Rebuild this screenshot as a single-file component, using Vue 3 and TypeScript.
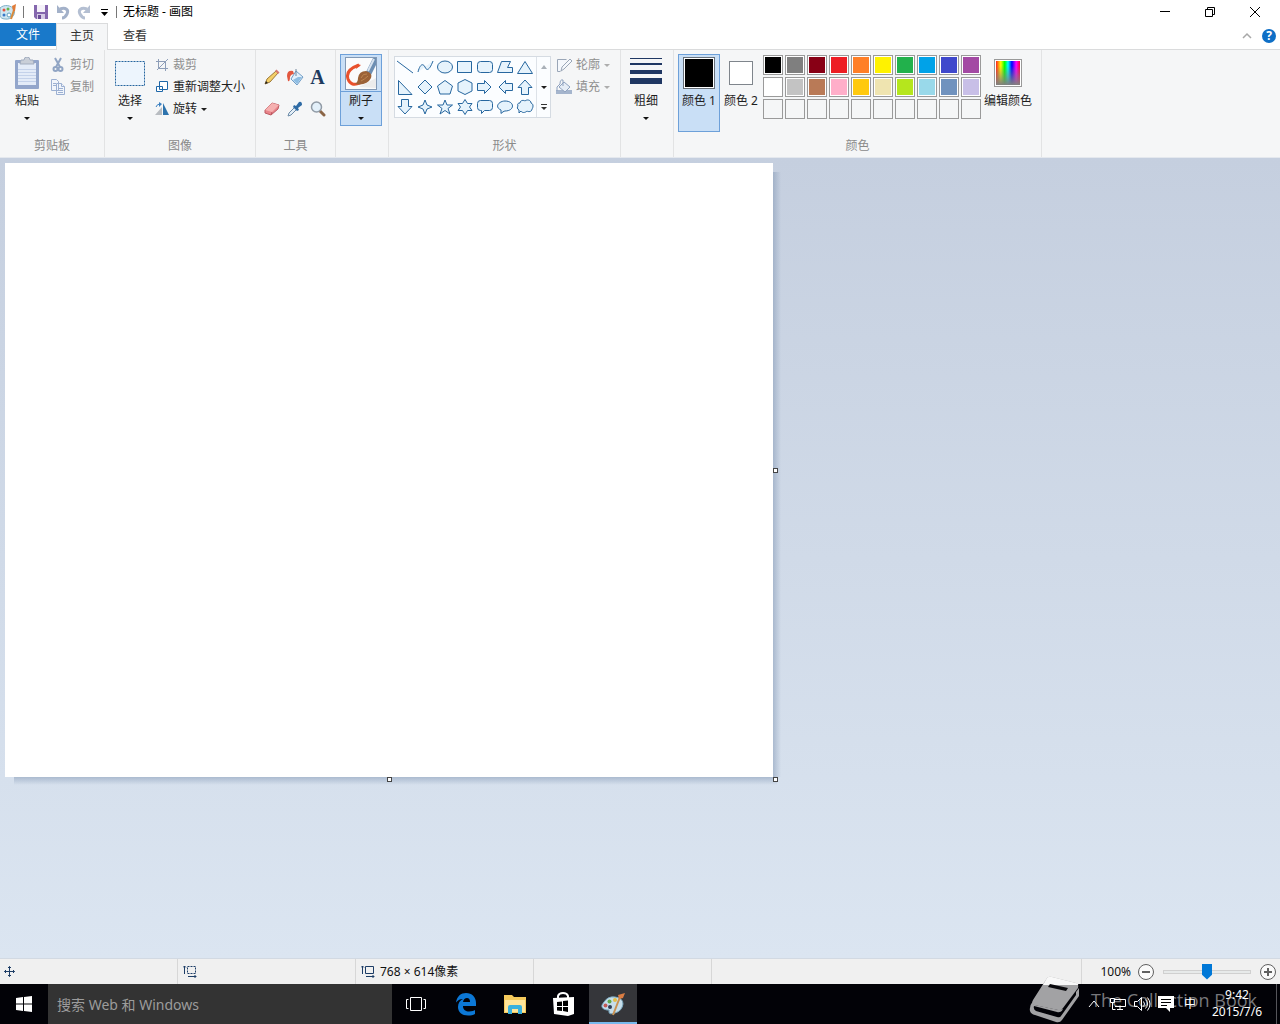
<script setup lang="ts">
import { ref } from 'vue'

interface Swatch {
  name: string
  value: string
}

const shapes: { name: string; d: string }[] = [
  { name: '直线', d: 'M2 4L18 16' },
  { name: '曲线', d: 'M3 15C5 7 8 6 10 10C12 15 15 12 18 4' },
  { name: '椭圆形', d: 'M2.500 10a7.500 6 0 1 0 15 0a7.500 6 0 1 0 -15 0' },
  { name: '矩形', d: 'M2.500 4.500h14v11h-14z' },
  { name: '圆角矩形', d: 'M5.500 4.500h9q3 0 3 3v5q0 3 -3 3h-9q-3 0 -3 -3v-5q0 -3 3 -3z' },
  { name: '多边形', d: 'M6.500 4.500h9l-3 6h5v5h-15z' },
  { name: '三角形', d: 'M10 4.500L17.500 16.500H2.500z' },
  { name: '直角三角形', d: 'M3.500 3.500V17.500H17z' },
  { name: '菱形', d: 'M10 3L17 10L10 17L3 10z' },
  { name: '五边形', d: 'M10 3.500L17.500 9L15 17H5L2.500 9z' },
  { name: '六边形', d: 'M10 2.500L17 6V14L10 17.500L3 14V6z' },
  { name: '右箭头', d: 'M2.500 6.500H9.500V3.500L16 10L9.500 16.500V13.500H2.500z' },
  { name: '左箭头', d: 'M17.500 6.500H10.500V3.500L4 10L10.500 16.500V13.500H17.500z' },
  { name: '向上箭头', d: 'M6.500 17.500V10.500H3L10 3L17 10.500H13.500V17.500z' },
  { name: '向下箭头', d: 'M6.500 2.500V9.500H3L10 17L17 9.500H13.500V2.500z' },
  { name: '四角星形', d: 'M10 3L12 8L17 10L12 12L10 17L8 12L3 10L8 8z' },
  { name: '五角星形', d: 'M10 3L12 8H17.500L13 11.500L15 17L10 13.500L5 17L7 11.500L2.500 8H8z' },
  { name: '六角星形', d: 'M10 2.500L12.500 6.500H17L14.500 10L17 13.500H12.500L10 17.500L7.500 13.500H3L5.500 10L3 6.500H7.500z' },
  { name: '圆角矩形标注', d: 'M5.500 3.500h9q3 0 3 3v4q0 3 -3 3h-5l-3 3v-3h-1q-3 0 -3 -3v-4q0 -3 3 -3z' },
  { name: '椭圆形标注', d: 'M6 16.500V13C-1 10 4 4 10 4C20 4 20 14 10 14C9 14 7 15.500 6 16.500z' },
  { name: '云形标注', d: 'M5 6C5 3 9 3 10 4C12 2 16 3 16 6C19 7 18 11 17 12C17 15 13 15 12 14C10 16 7 16 6 14L4 16L4 13C2 12 2 10 3 9C2 7 3 6 5 6z' },
]

const palette: Swatch[] = [
  { name: '黑色', value: '#000000' },
  { name: '灰色-50%', value: '#7f7f7f' },
  { name: '深红色', value: '#880015' },
  { name: '红色', value: '#ed1c24' },
  { name: '橙色', value: '#ff7f27' },
  { name: '黄色', value: '#fff200' },
  { name: '绿色', value: '#22b14c' },
  { name: '青绿', value: '#00a2e8' },
  { name: '靛青', value: '#3f48cc' },
  { name: '紫色', value: '#a349a4' },
  { name: '白色', value: '#ffffff' },
  { name: '灰色-25%', value: '#c3c3c3' },
  { name: '褐色', value: '#b97a57' },
  { name: '玫瑰色', value: '#ffaec9' },
  { name: '金色', value: '#ffc90e' },
  { name: '浅黄色', value: '#efe4b0' },
  { name: '酸橙色', value: '#b5e61d' },
  { name: '淡青绿色', value: '#99d9ea' },
  { name: '蓝灰色', value: '#7092be' },
  { name: '淡紫色', value: '#c8bfe7' },
]

const color1 = ref('#000000')
const zoom = ref(50)
</script>

<template>
  <div class="screen">
    <header class="titlebar">
      <svg class="app-icon" width="18" height="20" viewBox="0 0 18 20">
        <path d="M0 6C4 2 12 3 14 8C16 13 11 18 5 17C2 17 0 15 0 14z" fill="#cfe6f1" stroke="#7fb0c8" />
        <circle cx="4" cy="8" r="1.500" fill="#e5523d" /><circle cx="8" cy="7" r="1.500" fill="#65b54a" />
        <circle cx="4" cy="13" r="1.500" fill="#3878c8" /><circle cx="9" cy="13" r="2" fill="#fff" stroke="#5f9fbe" />
        <path d="M14 8L11 17" stroke="#d98a3a" stroke-width="2" /><path d="M12 4L16 2L15 9H13z" fill="#e07b38" />
      </svg>
      <i class="tick"></i>
      <button class="quick" aria-label="保存">
        <svg width="16" height="16" viewBox="0 0 16 16">
          <path d="M1 1h14v14H3l-2 -2z" fill="#8567ae" /><path d="M4 1h8v7H4z" fill="#f4f1f9" />
          <path d="M4 10h8v5H4z" fill="#d5cbe5" /><path d="M5 11h3v4H5z" fill="#6a4c97" />
        </svg>
      </button>
      <button class="quick" aria-label="撤消">
        <svg width="16" height="16" viewBox="0 0 16 16">
          <path d="M5 5C11 3 14 6 12 10C11 12 9 14 7 14" fill="none" stroke="#a3b1c9" stroke-width="3" />
          <path d="M2 1V9H9z" fill="#a3b1c9" />
        </svg>
      </button>
      <button class="quick" aria-label="重做">
        <svg width="16" height="16" viewBox="0 0 16 16">
          <path d="M10 5C4 3 1 6 3 10C4 12 6 14 8 14" fill="none" stroke="#b4bfd2" stroke-width="3" />
          <path d="M13 1V9H6z" fill="#b4bfd2" />
        </svg>
      </button>
      <button class="quick more" aria-label="自定义快速访问工具栏">
        <svg width="7" height="8" viewBox="0 0 7 8"><path d="M0 1.500h7" stroke="#000" /><path d="M0 4h7L3.500 8z" /></svg>
      </button>
      <i class="tick"></i>
      <h1>无标题 - 画图</h1>
      <div class="window-buttons">
        <button aria-label="最小化"><svg width="12" height="12"><path d="M1 5.500h10" stroke="#000" /></svg></button>
        <button aria-label="还原">
          <svg width="12" height="12" fill="none" stroke="#000"><path d="M1.500 3.500h7v7h-7zM3.500 3.500v-2h7v7h-2" /></svg>
        </button>
        <button aria-label="关闭"><svg width="12" height="12"><path d="M1 1L11 11M11 1L1 11" stroke="#000" /></svg></button>
      </div>
    </header>

    <nav class="tabs">
      <button class="file">文件</button>
      <button class="tab current">主页</button>
      <button class="tab">查看</button>
      <div class="tab-end">
        <button aria-label="折叠功能区"><svg width="10" height="8"><path d="M1 6L5 2L9 6" fill="none" stroke="#a8a8a8" stroke-width="1.500" /></svg></button>
        <button class="help" aria-label="帮助">?</button>
      </div>
    </nav>

    <section class="ribbon" aria-label="功能区">
      <div class="group clipboard">
        <div class="tools">
          <button class="big paste">
            <span class="picture">
              <svg width="26" height="34" viewBox="0 0 26 34">
                <rect x="1" y="3" width="24" height="29" rx="1" fill="#93a6cb" />
                <path d="M4 6h18v22H4z" fill="#e4ecf8" />
                <path d="M4 12.500h18M4 15.500h18M4 18.500h18M4 21.500h18M4 24.500h18" stroke="#c4d2ea" />
                <path d="M7 3h3q0 -3 3 -3t3 3h3l1 4H6z" fill="#c9cfd8" stroke="#a2adbf" />
              </svg>
            </span>
            <span>粘贴</span><i class="arrow"></i>
          </button>
          <div class="rows">
            <button class="small off">
              <svg width="16" height="16" viewBox="0 0 16 16" fill="none" stroke="#91a5c4" stroke-width="2">
                <path d="M5 1L10 10M11 1L6 10" /><circle cx="5.500" cy="12" r="2" /><circle cx="10.500" cy="12" r="2" />
              </svg>剪切
            </button>
            <button class="small off">
              <svg width="16" height="16" viewBox="0 0 16 16" fill="#f1f5fb" stroke="#9cb0d2">
                <path d="M1.500 0.500h5l2 2v9h-7zM6.500 4.500h5l3 3v8h-8z" /><path d="M3 4.500h3M3 6.500h3M8 9.500h5M8 11.500h5M8 13.500h5M11.500 4.500v3h3" />
              </svg>复制
            </button>
          </div>
        </div>
        <h2>剪贴板</h2>
      </div>

      <div class="group image">
        <div class="tools">
          <button class="big">
            <span class="picture">
              <svg width="32" height="32" viewBox="0 0 32 32">
                <rect x="1.500" y="3.500" width="29" height="24" fill="#edf5fd" stroke="#25659f" stroke-dasharray="2 1" />
              </svg>
            </span>
            <span>选择</span><i class="arrow"></i>
          </button>
          <div class="rows">
            <button class="small off">
              <svg width="14" height="14" viewBox="0 0 14 14" fill="none" stroke="#8e9eb8">
                <path d="M3.500 1v9.500H13M1 3.500h9.500V13M2 12L13 1" />
              </svg>裁剪
            </button>
            <button class="small">
              <svg width="14" height="14" viewBox="0 0 14 14" fill="#fff" stroke="#1e67a8">
                <path d="M1.500 6.500h6v5h-6zM4.500 1.500h8v8h-8z" />
              </svg>重新调整大小
            </button>
            <button class="small">
              <svg width="14" height="14" viewBox="0 0 14 14">
                <path d="M7 5V13H0z" fill="#b8bcc1" /><path d="M8 1L14 13H8z" fill="#2d73ad" />
                <path d="M1 5Q2 2 5 2" fill="none" stroke="#3a7fc0" /><path d="M4 0L7 2L4 5z" fill="#3a7fc0" />
              </svg>旋转<i class="arrow"></i>
            </button>
          </div>
        </div>
        <h2>图像</h2>
      </div>

      <div class="group kit">
        <div class="tools kit-grid">
          <button aria-label="铅笔">
            <svg width="16" height="16" viewBox="0 0 16 16">
              <path d="M1 15L3 10L12 2L14 4L6 13z" fill="#f4cf67" stroke="#9c7838" /><path d="M11 2L12.500 0.500L15.500 3.500L14 5z" fill="#d7796f" /><path d="M1 15L2 12L4 14z" fill="#222" />
            </svg>
          </button>
          <button aria-label="用颜色填充">
            <svg width="18" height="18" viewBox="0 0 18 18">
              <path d="M10 3L17 9L11 17L5 11z" fill="#e3f0fa" stroke="#6f9cc6" /><path d="M11 16L16 9L12 9L7 12z" fill="#8dbde3" />
              <path d="M7 3Q1 2 1 8L2 13Q4 14 4 9Q5 6 8 6z" fill="#e2573f" /><path d="M10 8V1" stroke="#71859b" />
            </svg>
          </button>
          <button class="letter" aria-label="文本">A</button>
          <button aria-label="橡皮擦">
            <svg width="18" height="16" viewBox="0 0 18 16">
              <path d="M2 9L9 2L16 4L15 8L8 14L2 12z" fill="#e9848a" stroke="#bd5a62" /><path d="M2 9L9 11L16 4L9 2z" fill="#f5b0b0" /><path d="M9 11L8 14" stroke="#bd5a62" />
            </svg>
          </button>
          <button aria-label="颜色选取器">
            <svg width="16" height="16" viewBox="0 0 16 16">
              <path d="M1 15L2 12L8 6L10 8L4 14z" fill="#e3eef7" stroke="#6c8ba8" /><path d="M7 4L9 5L12 1Q15 0 15 4L11 7L12 9L10 10L6 6z" fill="#2f6ba5" />
            </svg>
          </button>
          <button aria-label="放大镜">
            <svg width="16" height="16" viewBox="0 0 16 16">
              <path d="M10 10L14 14" stroke="#8b6546" stroke-width="3" stroke-linecap="round" /><circle cx="6.500" cy="6" r="5" fill="#e3f0fa" stroke="#919ba6" stroke-width="1.500" />
            </svg>
          </button>
        </div>
        <h2>工具</h2>
      </div>

      <div class="group narrow">
        <div class="tools">
          <button class="big picked brush">
            <span class="picture">
              <svg width="32" height="33" viewBox="0 0 32 33">
                <rect x="0.500" y="0.500" width="31" height="32" fill="#fafbfc" stroke="#8299b5" />
                <path d="M14 30L31 21V31z" fill="#ececec" />
                <path d="M14 8Q0 13 3 22Q6 30 15 26" fill="none" stroke="#e8512d" stroke-width="3" />
                <path d="M12 7L16 8L11 12z" fill="#e8512d" />
                <path d="M21 15L28 1H31V8L26 18z" fill="#6d8fb3" /><path d="M23 14L29 2" stroke="#d9e4ef" stroke-width="2" />
                <path d="M13 21Q14 14 21 14Q28 16 26 21Q22 29 10 27Q13 25 13 21z" fill="#9b6238" />
                <path d="M16 21Q18 16 22 17M16 24Q20 22 23 19" fill="none" stroke="#bd8550" />
              </svg>
            </span>
            <span>刷子</span><i class="arrow"></i>
          </button>
        </div>
      </div>

      <div class="group shapes">
        <div class="tools">
          <div class="gallery">
            <div class="gallery-grid">
              <button v-for="shape in shapes" :key="shape.name" :aria-label="shape.name">
                <svg width="20" height="20" viewBox="0 0 20 20"><path :d="shape.d" fill="#e6f3fc" stroke="#27679f" /></svg>
              </button>
            </div>
            <div class="gallery-scroll">
              <button aria-label="上一行"><svg width="6" height="4"><path d="M0 4h6L3 0z" fill="#a9b0b8" /></svg></button>
              <button aria-label="下一行"><i class="arrow"></i></button>
              <button aria-label="更多"><svg width="6" height="8"><path d="M0 1.500h6" stroke="#333" /><path d="M0 4h6L3 7z" fill="#333" /></svg></button>
            </div>
          </div>
          <div class="rows">
            <button class="small off">
              <svg width="16" height="16" viewBox="0 0 16 16" fill="#f5f8fc" stroke="#9aa6b7">
                <path d="M10.500 2.500h-9v12h3M5 14L6 10L14 2L16 4L8 12z" />
              </svg>轮廓<i class="arrow"></i>
            </button>
            <button class="small off">
              <svg width="16" height="16" viewBox="0 0 16 16">
                <path d="M0 11h16v4H0z" fill="#a5b5cd" /><path d="M8 3L14 8L9 13L3 8z" fill="#e6edf6" stroke="#8fa2bf" />
                <path d="M7 7V1Q4 0 4 5L1 8V12" fill="none" stroke="#8fa2bf" />
              </svg>填充<i class="arrow"></i>
            </button>
          </div>
        </div>
        <h2>形状</h2>
      </div>

      <div class="group narrow">
        <div class="tools">
          <button class="big">
            <span class="picture">
              <svg width="32" height="34" viewBox="0 0 32 34" fill="#1f3763"><path d="M0 1h32v1H0zM0 6h32v2H0zM0 13h32v4H0zM0 21h32v6H0z" /></svg>
            </span>
            <span>粗细</span><i class="arrow"></i>
          </button>
        </div>
      </div>

      <div class="group colors">
        <div class="tools">
          <button class="big picked tall">
            <span class="picture"><i class="well" :style="{ background: color1 }"></i></span><span>颜色 1</span>
          </button>
          <button class="big tall">
            <span class="picture"><i class="well second"></i></span><span>颜色 2</span>
          </button>
          <div class="palette">
            <button v-for="c in palette" :key="c.name" class="swatch" :aria-label="c.name" :style="{ background: c.value }" @click="color1 = c.value"></button>
            <button v-for="n in 10" :key="n" class="swatch empty" :aria-label="'自定义颜色 ' + n"></button>
          </div>
          <button class="big edit tall">
            <span class="picture"><i class="rainbow"></i></span><span>编辑颜色</span>
          </button>
        </div>
        <h2>颜色</h2>
      </div>
    </section>

    <main class="workspace">
      <div class="paper">
        <i class="handle right"></i><i class="handle bottom"></i><i class="handle corner"></i>
      </div>
    </main>

    <section class="status" aria-label="状态栏">
      <div class="cell">
        <svg width="12" height="12" viewBox="0 0 12 12" fill="none" stroke="#1d3d66"><path d="M5.500 0.500v10M0.500 5.500h10M4 2L5.500 0.500L7 2M4 9L5.500 10.500L7 9M2 4L0.500 5.500L2 7M9 4L10.500 5.500L9 7" /></svg>
      </div>
      <div class="cell">
        <svg width="14" height="14" viewBox="0 0 14 14" fill="none" stroke="#1d3d66"><path d="M1.500 9V1M0 2.500L1.500 1L3 2.500M5 11.500h8M11.500 10L13 11.500L11.500 13" /><path d="M4.500 1.500h8v7h-8z" stroke-dasharray="2 1" /></svg>
      </div>
      <div class="cell">
        <svg width="14" height="14" viewBox="0 0 14 14" fill="none" stroke="#1d3d66"><path d="M1.500 9V1M0 2.500L1.500 1L3 2.500M5 11.500h8M11.500 10L13 11.500L11.500 13M4.500 1.500h8v7h-8z" /></svg>
        <span>768 × 614像素</span>
      </div>
      <div class="cell"></div>
      <div class="cell rest"></div>
      <div class="zoom">
        <label for="zoom">100%</label>
        <button aria-label="缩小"><svg width="18" height="18" fill="#fafafa" stroke="#606060"><circle cx="9" cy="9" r="7.500" /><path d="M5 9h8" stroke-width="2" /></svg></button>
        <input id="zoom" v-model="zoom" type="range" min="0" max="100" />
        <button aria-label="放大"><svg width="18" height="18" fill="#fafafa" stroke="#606060"><circle cx="9" cy="9" r="7.500" /><path d="M5 9h8M9 5v8" stroke-width="2" /></svg></button>
      </div>
    </section>

    <footer class="taskbar">
      <button class="task" aria-label="开始">
        <svg width="16" height="16" viewBox="0 0 16 16" fill="#fff"><path d="M0 2L7 1V7.500H0zM8 1L16 0V7.500H8zM0 8.500H7V15L0 14zM8 8.500H16V16L8 15z" /></svg>
      </button>
      <input class="search" type="text" placeholder="搜索 Web 和 Windows" aria-label="搜索 Web 和 Windows" />
      <button class="task" aria-label="任务视图">
        <svg width="22" height="16" viewBox="0 0 22 16" fill="none" stroke="#fff"><path d="M5.500 1.500h11v13h-11zM3.500 3.500h-2v9h2M18.500 3.500h2v9h-2" /></svg>
      </button>
      <div class="apps">
        <button class="task" aria-label="Microsoft Edge">
          <svg width="22" height="24" viewBox="0 0 22 24" fill="#0c78d6"><path d="M1 10.500C2 4 6 1 11 1C17 1 21 5 21 11V14H8C8 18 11 19.500 14 19.500C17 19.500 19 18.500 20 18V22C18 23 16 23.500 13 23.500C7 23.500 3 20 3 15C3 11 5 8.500 8 7C5 7 3 8 1 10.500zM8 10H15C15 7.500 14 6 12 6C10 6 8.500 7.500 8 10z" /></svg>
        </button>
        <button class="task" aria-label="文件资源管理器">
          <svg width="22" height="20" viewBox="0 0 22 20"><path d="M0 1h8l2 2h12v16H0z" fill="#f5ca5c" /><path d="M1 6h20v12H1z" fill="#ffe59a" /><path d="M4 20V13Q4 11 6 11H16Q18 11 18 13V20H14V15H8V20z" fill="#39b1de" /></svg>
        </button>
        <button class="task" aria-label="应用商店">
          <svg width="22" height="24" viewBox="0 0 22 24"><path d="M5 7V4Q6 1 10 1T15 4V6" fill="none" stroke="#fff" stroke-width="2" /><path d="M0 6L21 5V22L15 24L1 22z" fill="#fff" /><path d="M4 10L9 9.500V14H4zM10 9L15 8.500V14H10zM4 15H9V19L4 18.500zM10 15H15V20L10 19z" fill="#000" /></svg>
        </button>
        <button class="task active" aria-label="画图">
          <svg width="24" height="24" viewBox="0 0 24 24">
            <path d="M3 10Q7 4 14 5Q22 6 22 12Q21 19 14 21Q8 23 8 20Q9 17 6 18Q0 17 1 13z" fill="#c6deea" stroke="#7ba9c0" />
            <circle cx="4.500" cy="13.500" r="2" fill="#c35a55" /><circle cx="8.500" cy="9.500" r="2" fill="#61a94b" /><circle cx="14" cy="8" r="2" fill="#e4bd45" /><circle cx="9" cy="15" r="2" fill="#303e55" />
            <path d="M19 5L12 23" stroke="#c99252" stroke-width="2" /><path d="M17 3L24 1L22 6L18 7z" fill="#da7d43" />
          </svg>
        </button>
      </div>
      <div class="tray">
        <button aria-label="显示隐藏的图标"><svg width="12" height="8" fill="none" stroke="#fff"><path d="M1 7L6 1L11 7" /></svg></button>
        <button aria-label="网络"><svg width="16" height="16" fill="none" stroke="#fff"><path d="M4.500 3.500h11v7H5M10 10.500v3M7 13.500h6M0.500 2.500h4v4h-4zM2.500 6.500v7h3" /></svg></button>
        <button aria-label="音量"><svg width="18" height="16" fill="none" stroke="#fff"><path d="M1.500 5.500h3l4 -4v13l-4 -4h-3zM10.500 5.500q2 2.500 0 5M12.500 3.500q4 4.500 0 9M14.500 1.500q5 6.500 0 13" /></svg></button>
        <button aria-label="通知"><svg width="18" height="18"><path d="M1 1h16v12h-4v4l-4 -4H1z" fill="#fff" /><path d="M4 4.500h10M4 7.500h10M4 10.500h6" stroke="#000" /></svg></button>
        <button class="ime">中</button>
      </div>
      <div class="clock"><time>9:42</time><span>2015/7/6</span></div>
      <div class="watermark">
        <svg width="52" height="48" viewBox="0 0 52 48">
          <path d="M18 2Q20 0 23 1L47 7Q50 8 49 12L34 32Q32 35 29 34L5 29Q2 28 4 24z" fill="#a2a2a4" />
          <path d="M18 2Q20 0 23 1L47 7Q50 8 49 9H14z" fill="#f8f8f8" />
          <path d="M21 8L39 12L37 15L19 11z" fill="#08080c" />
          <path d="M4 25Q0 30 1 35Q2 38 6 39L27 46Q31 47 33 44L50 20V12L47 16V19L32 40Q31 42 28 41L7 35Q4 33 5 30L28 36Q32 37 34 33L30 34L6 29Q3 28 4 25z" fill="#a2a2a4" />
        </svg>
        <span>The Collection Book</span>
      </div>
    </footer>
  </div>
</template>

<style>
body {
  margin: 0;
  font-family: "Noto Sans", "Noto Sans CJK SC", sans-serif;
  font-size: 12px;
  line-height: 18px;
  color: #1e1e1e;
}
</style>

<style scoped>
.screen {
  display: flex;
  flex-direction: column;
  min-height: 100vh;
  background: #fff;
}
button {
  display: flex;
  align-items: center;
  justify-content: center;
  box-sizing: border-box;
  padding: 0;
  border: 0;
  background: none;
  color: inherit;
  font: inherit;
  white-space: nowrap;
}
svg { display: block; flex: none; }
h1, h2 { margin: 0; font-size: 12px; font-weight: 400; }
.arrow {
  width: 0;
  border: 3px solid transparent;
  border-top-color: currentColor;
  border-bottom: 0;
}

/* title bar */
.titlebar { display: flex; align-items: center; height: 23px; color: #000; }
.app-icon { margin-right: 5px; }
.tick { width: 1px; height: 12px; background: #777; }
.titlebar .quick { width: 22px; height: 22px; }
.titlebar .tick + .quick { margin-left: 6px; }
.titlebar .more { width: 16px; margin-right: 4px; }
.titlebar h1 { margin-left: 6px; }
.window-buttons { display: flex; margin-left: auto; padding-right: 3px; }
.window-buttons button { width: 45px; height: 20px; }

/* tabs */
.tabs { display: flex; height: 27px; box-sizing: border-box; border-bottom: 1px solid #dadbdc; }
.file { width: 56px; height: 23px; background: #1979ca; color: #fff; }
.tab { width: 54px; height: 25px; color: #333; }
.tab.current { width: 52px; height: 27px; padding-bottom: 2px; border: 1px solid #dadbdc; border-bottom: 0; background: #f5f6f7; }
.tab-end { display: flex; align-items: center; gap: 10px; margin-left: auto; padding-right: 4px; }
.help { width: 14px; height: 14px; border-radius: 50%; background: #0f6fc6; color: #fff; font-weight: 700; }

/* ribbon */
.ribbon { display: flex; height: 108px; background: #f5f6f7; border-bottom: 1px solid #e4e8ee; box-sizing: border-box; }
.group {
  display: flex;
  flex-direction: column;
  justify-content: space-between;
  box-sizing: border-box;
  padding: 4px 4px 2px;
  border-right: 1px solid #e2e3e4;
}
.group h2 { text-align: center; color: #8a8a8a; }
.clipboard { width: 105px; }
.image { width: 151px; }
.kit { width: 80px; }
.narrow { width: 53px; }
.shapes { width: 232px; }
.colors { width: 368px; }
.tools { display: flex; align-items: flex-start; }
.big {
  flex: none;
  flex-direction: column;
  justify-content: flex-start;
  width: 42px;
  height: 72px;
  border: 1px solid transparent;
}
.big .picture { display: flex; align-items: center; justify-content: center; box-sizing: border-box; width: 100%; height: 37px; }
.big .arrow { margin-top: 7px; color: #111; }
.big.tall { height: 78px; }
.big.paste { width: 43px; padding-left: 3px; }
.paste + .rows .small { padding-left: 3px; }
.picked { background: #c9dff6; border-color: #6da0d9; }
.brush .picture { border-bottom: 1px solid #6da0d9; }
.rows { display: flex; flex-direction: column; }
.small { justify-content: flex-start; gap: 4px; height: 22px; padding-left: 4px; }
.off { color: #8f8f8f; }
.off .arrow { color: #adadad; }
.kit-grid { display: grid; grid-template-columns: repeat(3, 23px); grid-auto-rows: 32px; padding-top: 7px; }
.kit-grid button { height: 32px; }
.kit-grid .letter { font: 700 20px/32px "Liberation Serif", serif; color: #1d3a5f; }
.gallery { display: flex; margin: 2px 1px 0 1px; border: 1px solid #d5dbe2; background: #fbfdff; }
.gallery-grid { display: grid; grid-template-columns: repeat(7, 20px); grid-auto-rows: 20px; padding-right: 1px; }
.gallery-scroll { display: flex; flex-direction: column; border-left: 1px solid #dde2e8; }
.gallery-scroll button { width: 13px; height: 20px; }
.well { width: 30px; height: 30px; border: 1px solid #666f79; outline: 1px solid #fff; outline-offset: -2px; }
.well.second { width: 22px; height: 22px; background: #fff; border-color: #7f858c; }
.colors .picture { padding-bottom: 2px; }
.palette { display: grid; grid-template-columns: repeat(10, 20px); grid-auto-rows: 20px; gap: 2px; padding: 1px 2px 0 1px; }
.swatch { border: 1px solid #9a9a9a; box-shadow: inset 0 0 0 1px #fff; }
.swatch.empty { box-shadow: none; }
.big.edit { width: 50px; }
.rainbow {
  width: 24px;
  height: 24px;
  border: 1px solid #999;
  padding: 1px;
  background: linear-gradient(transparent 20%, #808080) content-box, linear-gradient(90deg, #f22, #ff0 20%, #0f0 36%, #0ff 50%, #00f 66%, #f0f 84%, #f03) content-box, #fff;
}

/* drawing area */
.workspace { flex: 1; padding: 5px; background: linear-gradient(#c5cfdf, #dbe5f1); }
.paper { position: relative; width: 768px; height: 614px; background: #fff; }
.paper::before, .paper::after { content: ""; position: absolute; }
.paper::before { top: 9px; bottom: 0; left: 100%; width: 8px; background: linear-gradient(90deg, #8095b280, #8095b200); }
.paper::after { left: 9px; right: -4px; top: 100%; height: 8px; background: linear-gradient(#8095b280, #8095b200); }
.handle { position: absolute; z-index: 1; width: 3px; height: 3px; border: 1px solid #444; background: #fff; }
.handle.right { left: 100%; top: calc(50% - 2px); }
.handle.bottom { left: calc(50% - 2px); top: 100%; }
.handle.corner { left: 100%; top: 100%; }

/* status bar */
.status { display: flex; height: 26px; box-sizing: border-box; border-top: 1px solid #d2d9e2; background: #f0f0f0; color: #111; }
.cell { display: flex; align-items: center; gap: 5px; width: 178px; box-sizing: border-box; padding-left: 5px; border-right: 1px solid #d7d7d7; }
.cell:first-child { padding-left: 4px; }
.cell.rest { flex: 1; }
.zoom { display: flex; align-items: center; padding-left: 18px; padding-right: 3px; gap: 6px; }
.zoom input { appearance: none; width: 88px; height: 18px; margin: 0 2px; background: none; }
.zoom input::-webkit-slider-runnable-track { height: 4px; border: 1px solid #d0d0d0; background: #e7eaea; box-sizing: border-box; }
.zoom input::-webkit-slider-thumb { appearance: none; width: 10px; height: 16px; margin-top: -7px; background: #0078d7; clip-path: polygon(0 0, 100% 0, 100% 70%, 50% 100%, 0 70%); }

/* task bar */
.taskbar { position: relative; display: flex; height: 40px; background: #020207; color: #fff; }
.task { width: 48px; height: 40px; }
.task.active { background: #35363a; border-bottom: 2px solid #76b9ed; padding-top: 2px; }
.search { width: 344px; box-sizing: border-box; border: 0; padding: 2px 9px 0; background: #333; color: #fff; font: inherit; font-size: 14px; }
.search::placeholder { color: #9c9c9c; }
.apps { display: flex; gap: 1px; padding-left: 2px; }
.tray { position: relative; z-index: 1; display: flex; align-items: center; margin-left: auto; }
.tray button { width: 24px; height: 40px; }
.clock {
  position: relative;
  z-index: 1;
  display: flex;
  flex-direction: column;
  align-items: center;
  justify-content: center;
  box-sizing: border-box;
  width: 75px;
  margin-right: 3px;
  padding: 0 4px 2px 0;
  border-right: 1px solid #55555a;
  line-height: 17px;
}
.watermark {
  position: absolute;
  right: 23px;
  bottom: 0;
  display: flex;
  align-items: center;
  gap: 10px;
  color: #77777b;
  font: 400 18px/24px "Open Sans", sans-serif;
  pointer-events: none;
}
</style>
